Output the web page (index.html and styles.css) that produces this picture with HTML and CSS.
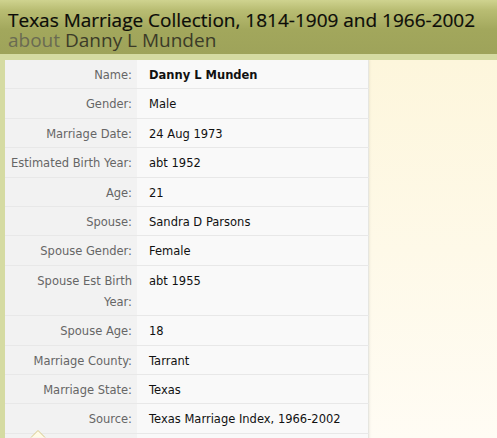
FILE: index.html
```html
<!DOCTYPE html>
<html>
<head>
<meta charset="utf-8">
<link rel="stylesheet" href="styles.css">
</head>
<body>
<div class="header">
  <h1 class="title">Texas Marriage Collection, 1814-1909 and 1966-2002</h1>
  <div class="subtitle"><span class="about">about</span> Danny L Munden</div>
</div>
<div class="page">
  <div class="content">
    <table class="record">
      <colgroup><col class="c-label"><col class="c-value"></colgroup>
      <tr><th>Name:</th><td class="strong">Danny L Munden</td></tr>
      <tr><th>Gender:</th><td>Male</td></tr>
      <tr><th>Marriage Date:</th><td>24 Aug 1973</td></tr>
      <tr><th>Estimated Birth Year:</th><td>abt 1952</td></tr>
      <tr><th>Age:</th><td>21</td></tr>
      <tr><th>Spouse:</th><td>Sandra D Parsons</td></tr>
      <tr><th>Spouse Gender:</th><td>Female</td></tr>
      <tr><th>Spouse Est Birth Year:</th><td>abt 1955</td></tr>
      <tr><th>Spouse Age:</th><td>18</td></tr>
      <tr><th>Marriage County:</th><td>Tarrant</td></tr>
      <tr><th>Marriage State:</th><td>Texas</td></tr>
      <tr><th>Source:</th><td>Texas Marriage Index, 1966-2002</td></tr>
      <tr><th>&nbsp;</th><td>&nbsp;</td></tr>
    </table>
    <svg class="caret" width="16" height="9" viewBox="0 0 16 9"><path d="M1 8.5 L8 1.5 L15 8.5" fill="#fffbe6" stroke="#d8c98a" stroke-width="1"/></svg>
  </div>
</div>
</body>
</html>
```
FILE: styles.css
```css
html, body { margin: 0; padding: 0; overflow: hidden; }
body {
  background: #d5dba2;
  font-family: "DejaVu Sans", Verdana, sans-serif;
  width: 497px;
  height: 438px;
}
.header {
  height: 54px;
  background: linear-gradient(to bottom, #cfd38f 0px, #b9bd73 10px, #a2a75c 30px, #9ea35a 54px);
  padding: 0 0 0 8px;
  box-sizing: border-box;
  overflow: hidden;
}
.title {
  margin: 0;
  padding-top: 10px;
  font-family: "Open Sans", sans-serif;
  font-weight: normal;
  font-size: 19px;
  line-height: 20px;
  color: #0c0c08;
  -webkit-text-stroke: 0.2px #0c0c08;
}
.subtitle {
  font-family: "Open Sans", sans-serif;
  font-size: 19px;
  line-height: 20px;
  color: #3b3b28;
}
.about { color: #6a6b52; }
.page {
  padding: 6px 0 0 5px;
}
.content {
  position: relative;
  background: linear-gradient(to bottom, #fdf6dc, #fffcf4);
  height: 378px;
  overflow: hidden;
}
.record {
  border-collapse: collapse;
  table-layout: fixed;
  width: 363px;
  border-right: 1px solid #e6e6e0;
  box-shadow: 1px 0 2px rgba(0,0,0,0.06);
}
.c-label { width: 132px; }
.c-value { width: 231px; }
.record th, .record td {
  font-size: 11.5px;
  line-height: 21px;
  padding: 5px 0 2.4px;
  border-bottom: 1px solid #e8e8e8;
  vertical-align: top;
}
.record th {
  background: #f2f2f2;
  color: #666;
  font-weight: normal;
  text-align: right;
  padding-left: 4px;
  padding-right: 5px;
}
.record td {
  background: #f9f9f9;
  color: #111;
  padding-left: 12px;
}
.record td.strong { font-weight: bold; }
.caret {
  position: absolute;
  left: 25px;
  top: 369px;
}
```
